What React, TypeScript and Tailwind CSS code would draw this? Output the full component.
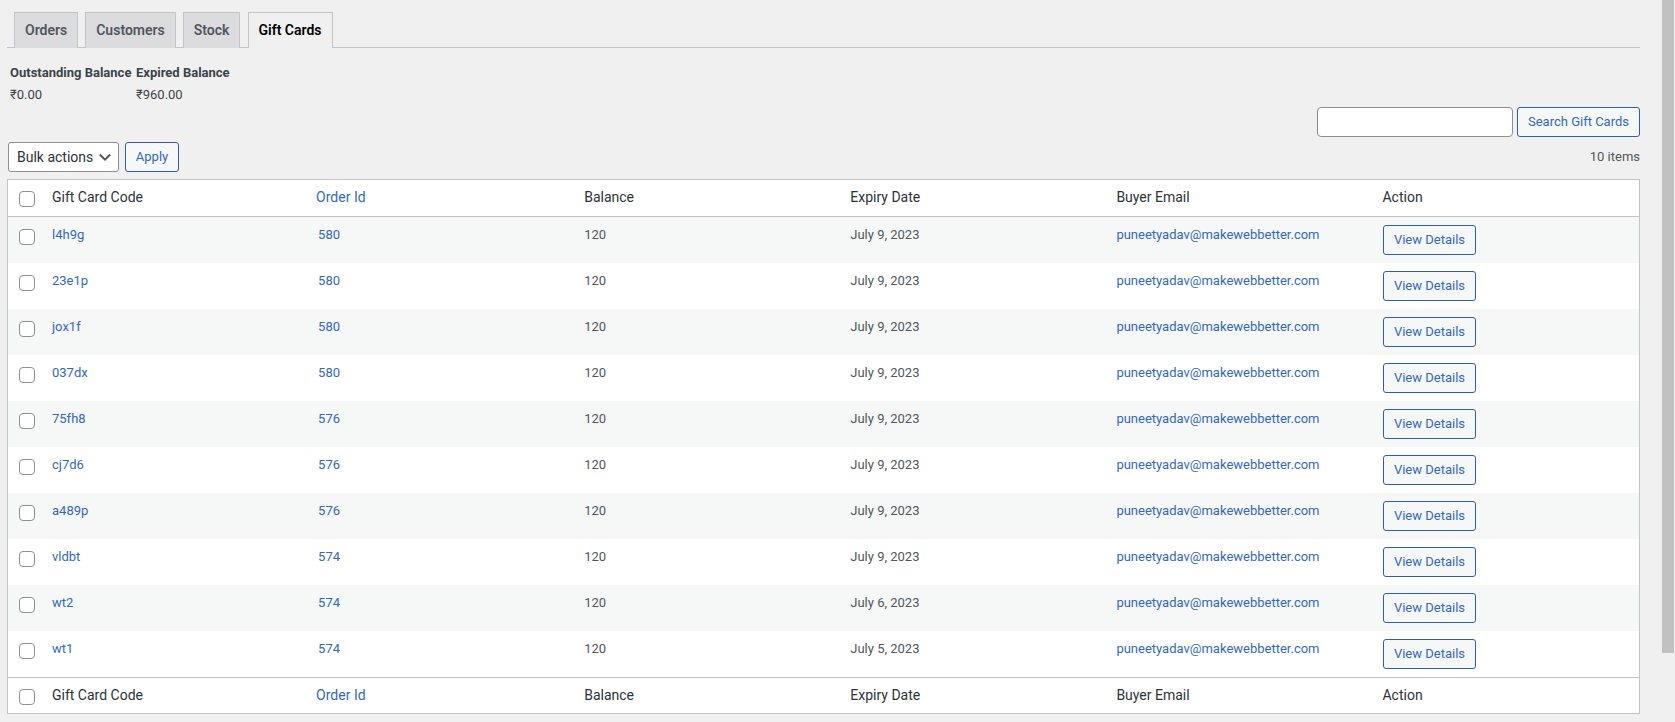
const rows = [
  { code: "l4h9g", order: "580", date: "July 9, 2023" },
  { code: "23e1p", order: "580", date: "July 9, 2023" },
  { code: "jox1f", order: "580", date: "July 9, 2023" },
  { code: "037dx", order: "580", date: "July 9, 2023" },
  { code: "75fh8", order: "576", date: "July 9, 2023" },
  { code: "cj7d6", order: "576", date: "July 9, 2023" },
  { code: "a489p", order: "576", date: "July 9, 2023" },
  { code: "vldbt", order: "574", date: "July 9, 2023" },
  { code: "wt2", order: "574", date: "July 6, 2023" },
  { code: "wt1", order: "574", date: "July 5, 2023" },
];

const tabs = ["Orders", "Customers", "Stock"];
const cols = "grid grid-cols-[34px_repeat(6,266.1px)]";

const Checkbox = () => (
  <span className="block w-4 h-4 ml-[11px] bg-white border border-[#8c8f94] rounded-[4px]" />
);

const ViewButton = () => (
  <button className="w-[93px] h-[30px] bg-[#f6f7f7] border border-[#2c5fae] rounded-[3px] text-[13px] text-[#3468c0]">
    View Details
  </button>
);

const HeadRow = ({ box }: { box: string }) => (
  <div className={`${cols} ${box} text-[14px] leading-[20px] text-[#2c3338] border-[#c3c4c7]`}>
    <div className="pt-[11px]">
      <Checkbox />
    </div>
    <div className="pl-[10px] pt-[7px]">Gift Card Code</div>
    <div className="pl-[8px] pt-[7px] text-[#3468c0]">Order Id</div>
    <div className="pl-[10px] pt-[7px]">Balance</div>
    <div className="pl-[10px] pt-[7px]">Expiry Date</div>
    <div className="pl-[10px] pt-[7px]">Buyer Email</div>
    <div className="pl-[10px] pt-[7px]">Action</div>
  </div>
);

export default function App() {
  return (
    <div className="relative h-screen overflow-hidden bg-[#f0f0f1] font-['Roboto',sans-serif] text-[13px] text-[#50575e]">
      <div className="ml-[7px] w-[1633px]">
        <div className="flex gap-[7px] h-[48px] pt-[12px] pl-[7px] border-b border-[#c3c4c7]">
          {tabs.map((tab) => (
            <div
              key={tab}
              className="h-[36px] px-[10px] flex items-center bg-[#dcdcde] border border-b-0 border-[#c3c4c7] text-[14px] font-semibold text-[#50575e]"
            >
              {tab}
            </div>
          ))}
          <div className="ml-px h-[36px] pl-[9px] pr-[11px] flex items-center bg-[#f0f0f1] border border-b-0 border-[#c3c4c7] text-[14px] font-semibold text-black">
            Gift Cards
          </div>
        </div>

        <div className="flex h-[59px] pt-[15px] pl-[3px] gap-[4px] text-[#3c434a]">
          <div className="w-[122px]">
            <div className="h-[20px] leading-[20px] font-bold whitespace-nowrap">Outstanding Balance</div>
            <div className="mt-[2px] h-[20px] leading-[20px]">₹0.00</div>
          </div>
          <div>
            <div className="h-[20px] leading-[20px] font-bold whitespace-nowrap">Expired Balance</div>
            <div className="mt-[2px] h-[20px] leading-[20px]">₹960.00</div>
          </div>
        </div>

        <div className="flex justify-end gap-[4px] h-[30px] mb-[5px]">
          <input className="w-[196px] h-[30px] bg-white border border-[#8c8f94] rounded-[4px] outline-none" />
          <button className="w-[123px] h-[30px] bg-[#f6f7f7] border border-[#2c5fae] rounded-[3px] text-[13px] text-[#3468c0]">
            Search Gift Cards
          </button>
        </div>

        <div className="flex items-center h-[30px] mb-[7px]">
          <div className="ml-px w-[111px] h-[30px] flex items-center justify-between pl-[8px] pr-[7px] bg-white border border-[#8c8f94] rounded-[3px] text-[14px] text-[#2c3338]">
            Bulk actions
            <svg width="12" height="12" viewBox="0 0 12 12" fill="none" stroke="#50575e" strokeWidth="1.9">
              <path d="M0.8 3.5l5.2 5.2 5.2-5.2" />
            </svg>
          </div>
          <button className="ml-[6px] w-[54px] h-[30px] bg-[#f6f7f7] border border-[#2c5fae] rounded-[3px] text-[13px] text-[#3468c0]">
            Apply
          </button>
          <div className="ml-auto">10 items</div>
        </div>

        <div className="bg-white border border-[#c3c4c7]">
          <HeadRow box="h-[37px] border-b" />
          {rows.map((row, i) => (
            <div key={row.code} className={`${cols} h-[46px] ${i % 2 === 0 ? "bg-[#f6f7f7]" : "bg-white"}`}>
              <div className="pt-[12px]">
                <Checkbox />
              </div>
              <div className="pl-[10px] pt-[8px] leading-[20px] text-[#3468c0]">{row.code}</div>
              <div className="pl-[10px] pt-[8px] leading-[20px] text-[#3468c0]">{row.order}</div>
              <div className="pl-[10px] pt-[8px] leading-[20px]">120</div>
              <div className="pl-[10px] pt-[8px] leading-[20px]">{row.date}</div>
              <div className="pl-[10px] pt-[8px] leading-[20px] text-[#3468c0]">puneetyadav@makewebbetter.com</div>
              <div className="pl-[10.5px] pt-[8px]">
                <ViewButton />
              </div>
            </div>
          ))}
          <HeadRow box="h-[36px] border-t" />
        </div>
      </div>

      <div className="absolute top-0 right-px w-[12px] h-[653px] bg-[#c1c1c1]" />
    </div>
  );
}
